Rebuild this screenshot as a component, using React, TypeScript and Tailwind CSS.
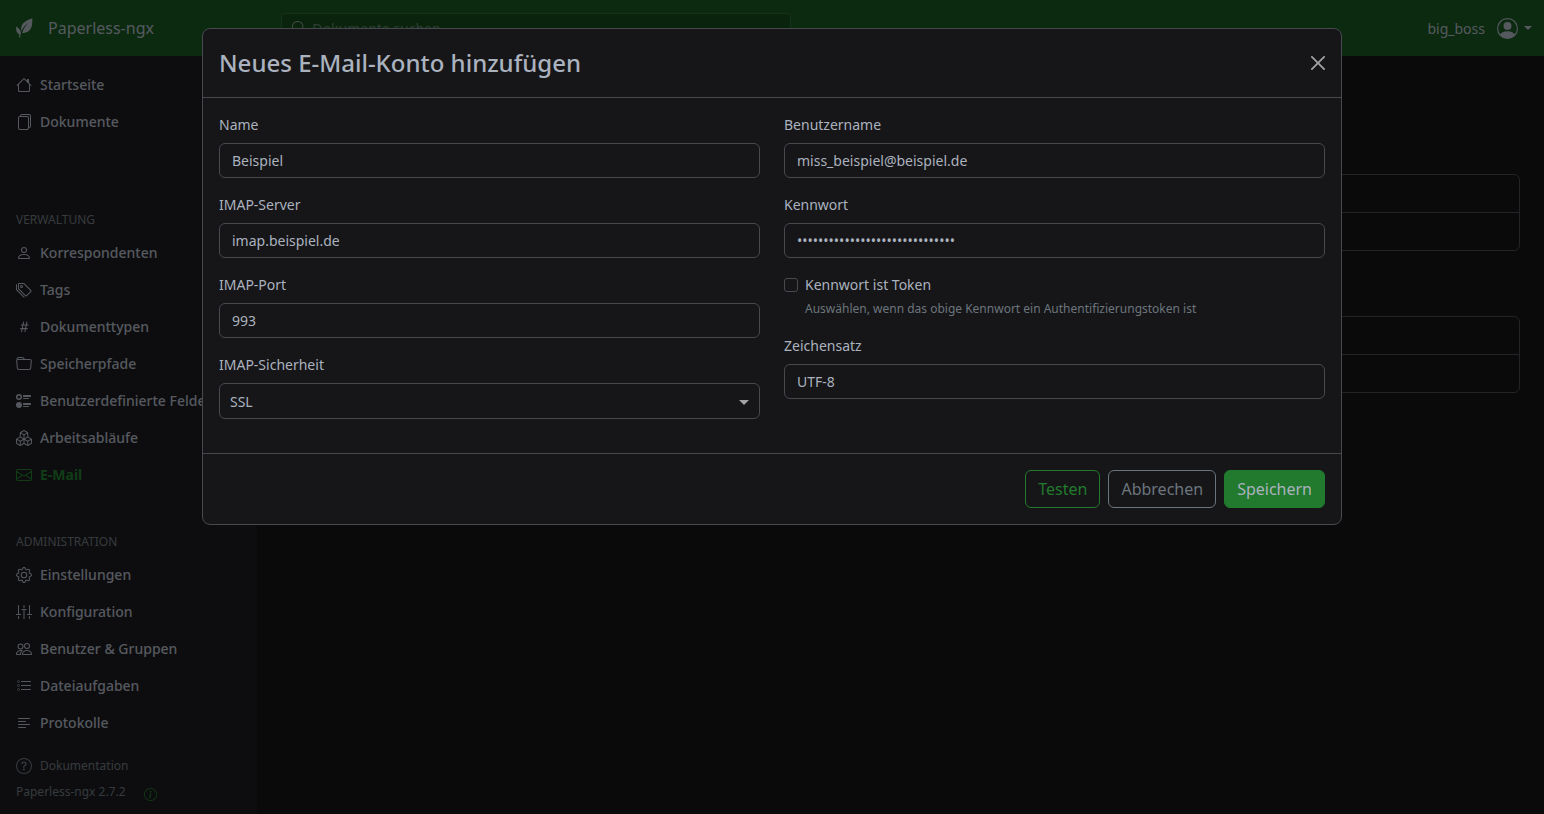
import { useState, type ReactNode } from "react";
import {
  BsBoxes,
  BsEnvelope,
  BsFiles,
  BsFolder,
  BsGear,
  BsHash,
  BsHouse,
  BsInfoCircle,
  BsListTask,
  BsPeople,
  BsPerson,
  BsPersonCircle,
  BsQuestionCircle,
  BsSearch,
  BsSliders2Vertical,
  BsTags,
  BsTextLeft,
  BsUiRadios,
} from "react-icons/bs";
import type { IconType } from "react-icons";

type NavEntry = { label: string; icon: IconType; active?: boolean };

const mainLinks: NavEntry[] = [
  { label: "Startseite", icon: BsHouse },
  { label: "Dokumente", icon: BsFiles },
];

const manageLinks: NavEntry[] = [
  { label: "Korrespondenten", icon: BsPerson },
  { label: "Tags", icon: BsTags },
  { label: "Dokumenttypen", icon: BsHash },
  { label: "Speicherpfade", icon: BsFolder },
  { label: "Benutzerdefinierte Felder", icon: BsUiRadios },
  { label: "Arbeitsabläufe", icon: BsBoxes },
  { label: "E-Mail", icon: BsEnvelope, active: true },
];

const adminLinks: NavEntry[] = [
  { label: "Einstellungen", icon: BsGear },
  { label: "Konfiguration", icon: BsSliders2Vertical },
  { label: "Benutzer & Gruppen", icon: BsPeople },
  { label: "Dateiaufgaben", icon: BsListTask },
  { label: "Protokolle", icon: BsTextLeft },
];

const inputClass =
  "w-full rounded-md border border-[#47494f] bg-[#161618] px-3 py-1.5 text-sm leading-[21px] text-[#abb2bf] outline-none";

const LeafLogo = () => (
  <svg viewBox="0 0 17 20" className="h-5 w-[17px]" fill="currentColor">
    <path d="M16.4 0.2C10.5 2 5.8 5 5.2 9.4C5 11 5.2 12.2 5.4 13C6.8 9.8 9.4 7.2 12.4 4.8C9.6 8 7.2 10.8 6.2 15C11 15 14.8 12.6 15.8 8C16.4 5.2 16.2 2.4 16.4 0.2Z" />
    <path d="M0.2 8.6C2.8 10.2 4.9 12.4 4.9 15.2C4.6 16.4 4.3 17.6 4.2 19.4L3 19.1C3.1 18 3.3 17.2 3.5 16.4C0.9 15.6 -0.3 12.4 0.2 8.6Z" />
  </svg>
);

const CloseIcon = () => (
  <svg viewBox="0 0 16 16" className="size-3.5" fill="#a2a2a3">
    <path d="M.293.293a1 1 0 0 1 1.414 0L8 6.586 14.293.293a1 1 0 1 1 1.414 1.414L9.414 8l6.293 6.293a1 1 0 0 1-1.414 1.414L8 9.414l-6.293 6.293a1 1 0 0 1-1.414-1.414L6.586 8 .293 1.707a1 1 0 0 1 0-1.414z" />
  </svg>
);

const NavList = ({ links }: { links: NavEntry[] }) => (
  <ul>
    {links.map(({ label, icon: Icon, active }) => (
      <li key={label}>
        <a
          href="#"
          className={`flex items-center gap-2 px-4 py-2 text-sm leading-[21px] whitespace-nowrap ${
            active ? "font-bold text-[#217a2d]" : "font-medium text-[#abb2bf]"
          }`}
        >
          <Icon className="mt-px size-4 shrink-0" />
          {label}
        </a>
      </li>
    ))}
  </ul>
);

const NavHeading = ({ children }: { children: ReactNode }) => (
  <h6 className="mb-[5px] px-4 text-xs leading-[18px] text-[#6c757d] uppercase">
    {children}
  </h6>
);

const Field = ({
  id,
  label,
  children,
}: {
  id: string;
  label: string;
  children: ReactNode;
}) => (
  <div className="mb-4">
    <label htmlFor={id} className="mb-2 block">
      {label}
    </label>
    {children}
  </div>
);

const TextInput = ({
  id,
  label,
  initial,
  type = "text",
}: {
  id: string;
  label: string;
  initial: string;
  type?: string;
}) => {
  const [value, setValue] = useState(initial);
  return (
    <Field id={id} label={label}>
      <input
        id={id}
        type={type}
        value={value}
        onChange={(e) => setValue(e.target.value)}
        className={`block ${inputClass}`}
      />
    </Field>
  );
};

const Navbar = () => (
  <header className="flex h-14 items-center bg-[#17541f] text-[#abb2bf]">
    <a href="#" className="flex w-1/6 items-center gap-[15px] px-4 text-base">
      <LeafLogo />
      Paperless-ngx
    </a>
    <form className="ml-6 flex w-1/3 max-w-[510px] items-center gap-1.5 rounded border border-[#2c6433] bg-[#12461a] px-2.5 text-[#abb2bf]">
      <BsSearch className="size-3.5 shrink-0 text-[#8b9a91]" />
      <input
        type="text"
        aria-label="Dokumente suchen"
        placeholder="Dokumente suchen"
        className="w-full py-1 text-sm leading-[21px] outline-none placeholder:text-[#5f7d64]"
      />
    </form>
    <button
      type="button"
      className="mr-3 ml-auto flex items-center text-sm leading-[21px]"
    >
      big_boss
      <BsPersonCircle className="mt-px ml-3 size-[21px]" />
      <svg viewBox="0 0 8 4" className="ml-1.5 h-1 w-2" fill="currentColor">
        <path d="M0 0h8L4 4z" />
      </svg>
    </button>
  </header>
);

const Sidebar = () => (
  <nav className="w-1/6 shrink-0 bg-[#1b1b1e] pt-2.5">
    <NavList links={mainLinks} />
    <div className="mt-[71px]">
      <NavHeading>Verwaltung</NavHeading>
      <NavList links={manageLinks} />
    </div>
    <div className="mt-10">
      <NavHeading>Administration</NavHeading>
      <NavList links={adminLinks} />
    </div>
    <div className="mt-4 px-4 text-xs leading-[18px] text-[#6c757d]">
      <a href="#" className="flex items-center gap-2">
        <BsQuestionCircle className="size-4" />
        Dokumentation
      </a>
      <div className="mt-2 flex items-center gap-[18px]">
        Paperless-ngx 2.7.2
        <a href="#" aria-label="Info" className="text-[#217a2d]">
          <BsInfoCircle className="mt-1 size-[13px]" />
        </a>
      </div>
    </div>
  </nav>
);

const EmptyList = () => (
  <ul className="divide-y divide-[#47494f] rounded-md border border-[#47494f]">
    <li className="h-[38px]" />
    <li className="h-[37px]" />
  </ul>
);

const AccountDialog = () => {
  const [isToken, setIsToken] = useState(false);

  return (
    <form
      role="dialog"
      aria-labelledby="dialog-title"
      className="mx-auto max-w-[1140px] rounded-lg border border-[#47494f] bg-[#161618] text-sm leading-[21px] text-[#abb2bf]"
    >
      <div className="flex items-center justify-between border-b border-[#47494f] p-4">
        <h4 id="dialog-title" className="text-2xl leading-9 font-medium">
          Neues E-Mail-Konto hinzufügen
        </h4>
        <button type="button" aria-label="Schließen">
          <CloseIcon />
        </button>
      </div>

      <div className="grid grid-cols-2 gap-6 px-4 pt-4 pb-[18px]">
        <div>
          <TextInput id="name" label="Name" initial="Beispiel" />
          <TextInput id="server" label="IMAP-Server" initial="imap.beispiel.de" />
          <TextInput id="port" label="IMAP-Port" initial="993" />
          <Field id="security" label="IMAP-Sicherheit">
            <div className="relative">
              <select
                id="security"
                defaultValue="SSL"
                className="block h-9 w-full appearance-none rounded-md border border-[#47494f] bg-[#161618] px-2.5 pt-0.5 text-sm text-[#abb2bf] outline-none"
              >
                <option>SSL</option>
              </select>
              <svg
                viewBox="0 0 10 5"
                className="pointer-events-none absolute top-[17px] right-[11px] h-[5px] w-2.5"
                fill="#a2a2a3"
              >
                <path d="M0 0h10L5 5z" />
              </svg>
            </div>
          </Field>
        </div>
        <div>
          <TextInput
            id="username"
            label="Benutzername"
            initial="miss_beispiel@beispiel.de"
          />
          <TextInput
            id="password"
            label="Kennwort"
            type="password"
            initial="beispiel-beispiel-beispiel-123"
          />
          <div className="mb-[17px] flex gap-[7px]">
            <input
              id="is-token"
              type="checkbox"
              checked={isToken}
              onChange={(e) => setIsToken(e.target.checked)}
              className="mt-1 size-3.5 appearance-none rounded-[3px] border border-[#47494f] checked:bg-[#217a2d]"
            />
            <div>
              <label htmlFor="is-token" className="block">
                Kennwort ist Token
              </label>
              <p className="mt-[5px] text-xs leading-[18px] text-[#6c757d]">
                Auswählen, wenn das obige Kennwort ein Authentifizierungstoken ist
              </p>
            </div>
          </div>
          <TextInput id="charset" label="Zeichensatz" initial="UTF-8" />
        </div>
      </div>

      <div className="flex justify-end gap-2 border-t border-[#47494f] p-4 text-base">
        <button
          type="button"
          className="rounded-md border border-[#217a2d] px-3 py-1.5 text-[#217a2d]"
        >
          Testen
        </button>
        <button
          type="button"
          className="rounded-md border border-[#6c757d] px-3 py-1.5 text-[#6c757d]"
        >
          Abbrechen
        </button>
        <button
          type="button"
          className="rounded-md border border-[#217a2d] bg-[#217a2d] px-3 py-1.5 text-[#abb2bf]"
        >
          Speichern
        </button>
      </div>
    </form>
  );
};

export default function App() {
  return (
    <div className="flex min-h-screen flex-col bg-[#141415] font-['Noto_Sans','Liberation_Sans',sans-serif]">
      <Navbar />
      <div className="flex grow">
        <Sidebar />
        <main className="flex grow flex-col gap-[65px] px-6 pt-[118px]">
          <EmptyList />
          <EmptyList />
        </main>
      </div>

      <div className="fixed inset-0 overflow-y-auto bg-black/50 px-4 py-7">
        <AccountDialog />
      </div>
    </div>
  );
}
